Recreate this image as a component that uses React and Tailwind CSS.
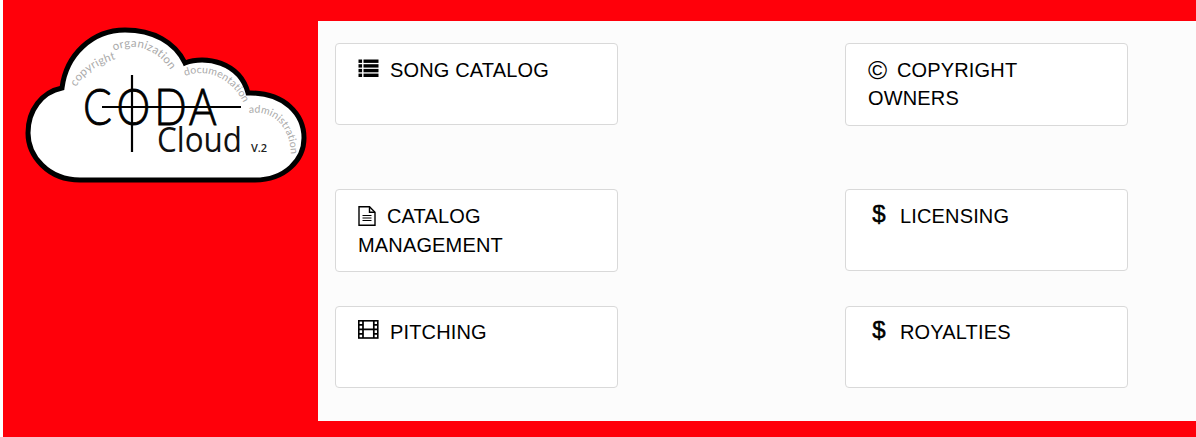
const FONT = "font-['Liberation_Sans',Arial,sans-serif]";

function ListIcon() {
  return (
    <svg width="21" height="19" viewBox="0 0 21 19" className="inline-block mr-[11px] align-[-1px]" fill="#000">
      <rect x="0.5" y="0.5" width="3.6" height="3.4" />
      <rect x="5.5" y="0.5" width="15" height="3.4" />
      <rect x="0.5" y="5.2" width="3.6" height="3.4" />
      <rect x="5.5" y="5.2" width="15" height="3.4" />
      <rect x="0.5" y="9.9" width="3.6" height="3.4" />
      <rect x="5.5" y="9.9" width="15" height="3.4" />
      <rect x="0.5" y="14.6" width="3.6" height="3.4" />
      <rect x="5.5" y="14.6" width="15" height="3.4" />
    </svg>
  );
}

function FileIcon() {
  return (
    <svg width="18" height="20" viewBox="0 0 18 20" className="inline-block mr-[11px] align-[-3px]" fill="none" stroke="#000" strokeWidth="1.4">
      <path d="M1 .8h10.5L17 6.2V19.2H1z" />
      <path d="M11.5 .8V6.2H17" />
      <path d="M4.5 9.5h9M4.5 12h9M4.5 14.5h9" strokeWidth="1.2" />
    </svg>
  );
}

function FilmIcon() {
  return (
    <svg width="21" height="19" viewBox="0 0 21 19" className="inline-block mr-[11px] align-[0px]" fill="none" stroke="#000">
      <rect x="0.8" y="0.8" width="19" height="17.2" strokeWidth="1.6" />
      <path d="M5 .8v17.2M15.8 .8v17.2M5 9.4h10.8" strokeWidth="1.7" />
      <path d="M.8 4.9H5M.8 9.4H5M.8 13.9H5M15.8 4.9h4M15.8 9.4h4M15.8 13.9h4" strokeWidth="1.6" />
    </svg>
  );
}

function GlyphIcon({ children, cls }) {
  return <span className={`inline-block mr-[11px] text-center ${cls}`}>{children}</span>;
}

function Card({ icon, label, h, extra }) {
  return (
    <div className={`bg-white border border-[#d9d9d9] rounded-[4px] w-[283px] pl-[22px] pr-[22px] text-[20px] tracking-[0.15px] text-[#000] ${h} ${extra}`}>
      {icon}
      {label}
    </div>
  );
}

function Dollar() {
  return (
    <GlyphIcon cls="w-[21px] pl-[1px] text-[24px] leading-[20px] align-[1px] tracking-normal [-webkit-text-stroke:0.5px_#000]">$</GlyphIcon>
  );
}

function Logo() {
  const arc = "fill-[#aaaaaa] font-['Lato',sans-serif]";
  return (
    <svg width="315" height="200" viewBox="0 0 315 200" className="block">
      <g transform="translate(-3 0)">
        <path
          d="M80 180C48 180 28 156 28 133C28 110 42 92 62 88C66 55 92 30 125 30C153 30 175 42 185 63C205 55 240 62 248 93C285 92 304 115 304 138C304 160 285 180 255 180Z"
          fill="#fff"
          stroke="#000"
          strokeWidth="5"
        />
        <defs>
          <path id="arc1" d="M76 87Q86 68 116 59" />
          <path id="arc1b" d="M114 51C135 41 160 49 174 76" />
          <path id="arc2" d="M185 76C205 68 232 76 245 106" />
          <path id="arc3" d="M249 113C272 110 292 125 291 160" />
        </defs>
        <text className={arc} fontSize="11.5" letterSpacing="0.3">
          <textPath href="#arc1">copyright</textPath>
        </text>
        <text className={arc} fontSize="11.5" letterSpacing="0.3">
          <textPath href="#arc1b">organization</textPath>
        </text>
        <text className={arc} fontSize="10.5" letterSpacing="0.1">
          <textPath href="#arc2">documentation</textPath>
        </text>
        <text className={arc} fontSize="10.5" letterSpacing="0.1">
          <textPath href="#arc3">administration</textPath>
        </text>
        <g transform="translate(83 125) scale(0.82 1)">
          <text x="0 41 87 129" y="0" fontSize="52" fill="#000" stroke="#000" strokeWidth="0.9" className="font-['Lato',sans-serif] font-light">CODA</text>
        </g>
        <path d="M132 75V152" stroke="#000" strokeWidth="2.2" />
        <path d="M102 107H241" stroke="#000" strokeWidth="2.2" />
        <text x="157" y="152" fontSize="34" textLength="85" lengthAdjust="spacingAndGlyphs" fill="#111" className="font-['Open_Sans',sans-serif]">Cloud</text>
        <text x="251" y="152" fontSize="11" fill="#222" className="font-['Open_Sans',sans-serif] font-semibold">V.2</text>
      </g>
    </svg>
  );
}

export default function App() {
  return (
    <div className={`h-[437px] w-[1196px] overflow-hidden bg-white pl-[3px] ${FONT}`}>
      <div className="h-full bg-[#ff000a] flex">
        <div className="w-[315px] shrink-0">
          <Logo />
        </div>
        <div className="mt-[21px] h-[400px] flex-1 bg-[#fcfcfc] pl-[17px] pt-[22px]">
          <div className="grid grid-cols-[510px_283px] grid-rows-[146px_117px_82px]">
            <Card h="h-[82px]" extra="pt-[12px] leading-[28.5px]" icon={<ListIcon />} label="SONG CATALOG" />
            <Card h="h-[83px]" extra="pt-[12px] leading-[28px]" icon={<GlyphIcon cls="w-[18px] text-[26px] leading-[20px] align-[-2px] tracking-normal">©</GlyphIcon>} label="COPYRIGHT OWNERS" />
            <Card h="h-[83px]" extra="pt-[12px] leading-[29px]" icon={<FileIcon />} label="CATALOG MANAGEMENT" />
            <Card h="h-[82px]" extra="pt-[12px] leading-[28.5px]" icon={<Dollar />} label="LICENSING" />
            <Card h="h-[82px]" extra="pt-[11px] leading-[28.5px]" icon={<FilmIcon />} label="PITCHING" />
            <Card h="h-[82px]" extra="pt-[11px] leading-[28.5px]" icon={<Dollar />} label="ROYALTIES" />
          </div>
        </div>
      </div>
    </div>
  );
}
